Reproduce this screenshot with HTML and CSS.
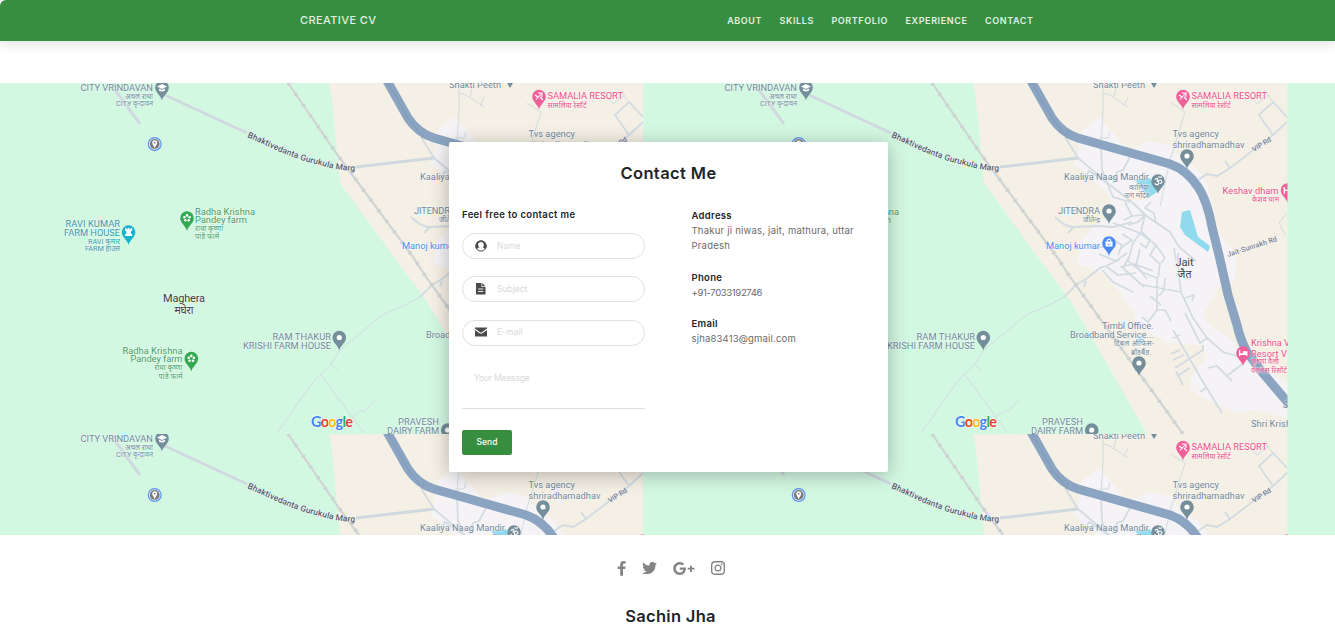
FILE: index.html
```html
<!DOCTYPE html>
<html lang="en">
<head>
<meta charset="utf-8">
<title>Creative CV</title>
<link rel="stylesheet" href="styles.css">
</head>
<body>
<svg class="defs" width="0" height="0" aria-hidden="true">
  <defs>
    <path id="marg" d="M247 54C270 64 292 76 320 82Q338 88 358 88"/>
    <g id="pin"><path d="M0 13C-1.200 7.500-6.800 5.500-6.800 0A6.800 6.800 0 0 1 6.800 0C6.800 5.500 1.200 7.500 0 13Z"/></g>
    <g id="dot"><circle r="2.600" fill="#fff"/></g>
    <g id="flower" fill="#fff"><circle cy="-2.600" r="1.300"/><circle cx="2.600" cy="-.7" r="1.300"/><circle cx="1.700" cy="2.300" r="1.300"/><circle cx="-1.700" cy="2.300" r="1.300"/><circle cx="-2.600" cy="-.7" r="1.300"/></g>
  </defs>
</svg>

<nav class="navbar">
  <div class="navbar-inner">
    <a class="brand">CREATIVE CV</a>
    <div class="links">
      <a>ABOUT</a><a>SKILLS</a><a>PORTFOLIO</a><a>EXPERIENCE</a><a>CONTACT</a>
    </div>
  </div>
</nav>

<section class="contact">
  <div class="map" id="map">
    <svg class="tile" width="644" height="351" viewBox="0 0 644 351">
      <rect width="644" height="351" fill="#d3f8e2"/>
      <path fill="#f5f0e5" d="M329 0L332 16 337 70 340 100 396 177 426 217 439 239 503 351H643.500V0Z"/>
      <path fill="#f5f3f5" d="M455 34L438 47 435 66 430 82 439 87 466 113V134L449 144 439 157 433 177 434 181 458 190 476 209 489 229 493 242 523 260 559 262 562 275 546 295V305L559 315 593 330 613 327 643.500 335V300L616 285 586 255 568 244 559 232 569 214 578 200 591 199 592 172 574 148 563 100 554 87 536 74 526 62 506 58 484 67Z"/>
      <path fill="#90daee" d="M491 97L506 95 513 109 504 115 499 106ZM538 129L546 127 554 154 566 163 564 169 541 152 536 144Z"/>
      <g fill="none" stroke="#d2dbe1">
        <path stroke="#d0d9e0" stroke-width="3" d="M115 7L140 41M165 12L247 50M356 84L434 75"/>
        <path stroke-width="1" d="M420 214L405 222 382 232 340 267 331 281 313 299 277 350M321 292L352 334 364 350M352 334L360 328H365L376 316M331 281L338 288"/>
        <path stroke-width="1" d="M459 0V30L457 60M459 10L466 12 484 24M480 23L484 14M470 14L472 5M455 55H464L466 48M541 29L526 77 516 124M527 20L541 29M628 18L620 7M605 12L613 21 625 12M643 130L635 140 642 153"/>
        <path stroke-width="1.800" d="M420 214L432 202 442 196 456 185 462 183 475 177M442 198L440 204M458 187L469 199 489 209M421 54L434 75 466 102 489 120 501 132 526 149 535 164 552 178M466 102L445 88 440 96M457 60L458 87 469 114 486 119M486 74L479 87 473 89 469 100M554 97L563 91 573 93 586 85 629 52 643 39M581 78L586 85M629 52L615 32 629 19 643 34M411 134Q420 143 428 144L456 143 469 144 488 139M424 150L430 144"/>
        <path stroke-width="1.700" d="M469 140L496 150 512 162 521 175M480 137L488 133 501 132 494 139 484 142M488 133L481 119M496 150L489 160 484 178 498 189 513 195V227L504 239 498 234M512 227H521L527 238M521 195L520 207 515 213M506 213L517 222M501 132L497 148 506 157 502 165 496 160M512 162L506 172 516 181 514 195M521 175L517 180M478 151L488 157 477 165M470 157L478 162 474 172M496 166L492 182 503 196M486 172L479 185 500 204M476 184L490 181 509 188M455 171L472 178 483 170M463 184L474 192 492 190M507 119L501 125 510 130 512 140M534 170L534 182 537 209 549 235 563 255 579 269 593 273 600 275M499 202L537 209M541 215L550 212 548 218M541 230L556 260 563 255M559 262V267L531 285M529 247L559 299 578 330M529 255L536 252M536 267L527 271M540 272L529 277M532 288L539 302M539 289L546 285M533 293L540 289M564 285L573 283 588 298M584 292L601 279M556 309L562 305M452 164L472 164M530 165L532 177"/>
        <path stroke="#d0d5d4" stroke-width="2.200" d="M288 0L339 74 413 174 426 194 539 351"/>
        <path stroke="#cbd1d1" stroke-width="4" stroke-dasharray="2 11" d="M288 0L339 74 413 174 426 194 539 351"/>
      </g>
      <g fill="none" stroke="#8aa4c1" stroke-linejoin="round">
        <path stroke-width="9" d="M386 -4L408 35Q418 50 434 55L526 81Q543 87 554 104 563 117 568 144L575 172 584 212 593 242Q596 256 603 269L618 289 646 322"/>
        <path stroke="#7891b3" stroke-width=".6" d="M386 -4L408 35 421 52M422 55L424 49"/>
      </g>

      <g fill="#758e9b">
        <use href="#pin" x="162" y="4.500"/><use href="#pin" x="339.300" y="254.500"/><use href="#pin" x="447.700" y="347"/><use href="#pin" x="543" y="73"/><use href="#pin" x="514" y="98"/><use href="#pin" x="465" y="128"/><use href="#pin" x="495" y="280"/><path d="M507 0H513L510 5Z"/>
      </g>
      <g fill="#34a853"><use href="#pin" x="187" y="135"/><use href="#pin" x="191.300" y="275.500"/></g>
      <use href="#pin" x="128.600" y="149" fill="#12b5cb"/>
      <use href="#pin" x="465" y="160" fill="#4a8af4"/>
      <g fill="#f2609a"><use href="#pin" x="539" y="13.500"/><use href="#pin" x="643.500" y="107"/><use href="#pin" x="599" y="270"/></g>
      <rect x="643.500" width="1" height="351" fill="#d3f8e2"/>
      <use href="#dot" x="339.300" y="254.500"/><use href="#dot" x="447.700" y="347"/><use href="#dot" x="543" y="73"/><use href="#dot" x="465" y="128"/><use href="#dot" x="495" y="280"/>
      <use href="#flower" x="187" y="135"/><use href="#flower" x="191.300" y="275.500"/>
      <path fill="#fff" d="M157 3.500L162 1 167 3.500 162 6ZM159 5.500V7.500Q162 9.500 165 7.500V5.500L162 7ZM125 145H126.500V146.300H127.800V145H129.400V146.300H130.700V145H132.200V148H130.900V151H132.200V153H125V151H126.300V148H125ZM461.500 158.500H468.500V163.500H461.500ZM595 267H596.300V270.300H599V268.300H603.500V273H602.300V272H596.300V273H595ZM639.500 104H641V106.500H643.500V108H641V110.500H639.500Z"/>
      <path fill="none" stroke="#fff" stroke-width="1.100" d="M463.200 158.500Q463.200 156 465 156T466.800 158.500M536 16.500L541 11M538 10H542V14M535 12L538 14M540 14L543 17M511 96.500Q514 94 514 97 514 98 512.500 98 515 98 514.500 101 512 103 511 100M514.500 98Q517 95.500 518 99 517 101 515.500 100M514.500 93.500Q516 95 518 93.500"/>
      <path stroke="#4a8af4" d="M463.200 160.800Q465 163 466.800 160.800" fill="none" stroke-width=".7"/>
      <circle cx="154.700" cy="61" r="6.400" fill="#e9f3fb" stroke="#5b93ee" stroke-width="1.200"/>
      <circle cx="154.700" cy="61" r="4.900" fill="#7b7b7b"/>
      <path fill="#fff" d="M154.700 65.500C154.400 63 152.200 62 152.200 59.700A2.500 2.500 0 0 1 157.200 59.700C157.200 62 155 63 154.700 65.500Z"/>
      <circle cx="154.700" cy="59.600" r=".9" fill="#777"/>

      <g class="label slate end">
        <text x="153" y="8" textLength="72.500">CITY VRINDAVAN</text>
        <text class="hi" x="153" y="15.500" textLength="28">अचल राधा</text>
        <text class="hi" x="153" y="22.500" textLength="37">CITY वृन्दावन</text>
        <text x="331" y="257" textLength="58.500">RAM THAKUR</text>
        <text x="331" y="266" textLength="88">KRISHI FARM HOUSE</text>
        <text x="439" y="342" textLength="41">PRAVESH</text>
        <text x="439" y="351" textLength="52">DAIRY FARM</text>
        <text x="505" y="97" textLength="85">Kaaliya Naag Mandir</text>
        <text class="hi" x="505" y="107" textLength="20">कालिया</text>
        <text class="hi" x="505" y="114.500" textLength="25">नाग मंदिर</text>
        <text x="456" y="131" textLength="42">JITENDRA</text>
        <text class="hi" x="456" y="139" textLength="17">जीतेन्द्र</text>
        <text x="509.500" y="246" textLength="51.500">Timbl Office.</text>
        <text x="509.500" y="255" textLength="83.500">Broadband Service...</text>
        <text class="hi" x="510" y="263" textLength="40">टिंबल ऑफिस-</text>
        <text class="hi" x="509" y="271.500" textLength="22">ब्रॉडबैंड .</text>
      </g>
      <g class="label slate">
        <text x="449" y="4.500" textLength="52">Shakti Peeth</text>
        <text x="528.500" y="54" textLength="46.500">Tvs agency</text>
        <text x="528.500" y="65" textLength="72">shriradhamadhav</text>
        <text x="607" y="344" textLength="40">Shri Krish</text>
        <text x="638.500" y="325">S</text>
      </g>
      <g class="label teal end">
        <text x="120" y="143.500" textLength="54.500">RAVI KUMAR</text>
        <text x="120" y="153" textLength="56">FARM HOUSE</text>
        <text class="hi" x="120" y="160.500" textLength="32">RAVI कुमार</text>
        <text class="hi" x="120" y="167.500" textLength="35">FARM हाउस</text>
      </g>
      <g class="label green">
        <text x="195" y="131.500" textLength="60">Radha Krishna</text>
        <text x="195" y="139.500" textLength="52">Pandey farm</text>
        <text class="hi" x="195" y="147.500" textLength="28">राधा कृष्णा</text>
        <text class="hi" x="195" y="156" textLength="24">पांडे फार्म</text>
      </g>
      <g class="label green end">
        <text x="182.500" y="271" textLength="60">Radha Krishna</text>
        <text x="182.500" y="279" textLength="52">Pandey farm</text>
        <text class="hi" x="182.500" y="286.500" textLength="28">राधा कृष्णा</text>
        <text class="hi" x="182.500" y="295.500" textLength="24">पांडे फार्म</text>
      </g>
      <g class="label pink">
        <text x="547.500" y="16" textLength="75.500">SAMALIA RESORT</text>
        <text class="hi" x="547.500" y="24.500" textLength="39">सामलिया रेसॉर्ट</text>
        <text x="607" y="263" textLength="39">Krishna V</text>
        <text x="607" y="273.500" textLength="36">Resort V</text>
        <text class="hi" x="607" y="281" textLength="28">कृष्णा वैली</text>
        <text class="hi" x="607" y="289.500" textLength="36">वेलनेस रिसॉर्ट</text>
      </g>
      <g class="label pink end">
        <text x="634.500" y="110.500" textLength="56">Keshav dham</text>
        <text class="hi" x="635" y="118.500" textLength="27">केशव धाम</text>
      </g>
      <text class="label blue end" x="456" y="166" textLength="54">Manoj kumar</text>
      <g class="label town">
        <text x="184" y="219" textLength="42">Maghera</text>
        <text class="town-hi" x="184" y="230.500" textLength="19">मघेरा</text>
        <text x="540.500" y="183" textLength="18">Jait</text>
        <text class="town-hi" x="540.500" y="195" textLength="14">जैत</text>
      </g>
      <text class="label road"><textPath href="#marg" textLength="114">Bhaktivedanta Gurukula Marg</textPath></text>
      <text class="label road small" transform="translate(610 69) rotate(-32)" textLength="21">VIP Rd</text>
      <text class="label road small" transform="translate(584 174) rotate(-18)" textLength="52">Jait-Sunrakh Rd</text>
      <text class="logo" x="311" y="344" textLength="42"><tspan fill="#4285f4">G</tspan><tspan fill="#ea4335">o</tspan><tspan fill="#fbbc04">o</tspan><tspan fill="#4285f4">g</tspan><tspan fill="#34a853">l</tspan><tspan fill="#ea4335">e</tspan></text>
    </svg>
  </div>

  <div class="card">
    <h1 class="card-title">Contact Me</h1>
    <div class="columns">
      <form class="form">
        <p class="lead">Feel free to contact me</p>
        <div class="field">
          <svg width="12" height="12" viewBox="0 0 12 12"><circle cx="6" cy="6" r="5.100" fill="none" stroke="#4a4a4a"/><path fill="#4a4a4a" fill-rule="evenodd" d="M6 .5A5.500 5.500 0 0 0 1.800 9.600Q2.500 7.800 4.300 7.600 3.100 6.500 3.100 4.800A2.900 2.900 0 0 1 8.900 4.800Q8.900 6.500 7.700 7.600 9.500 7.800 10.200 9.600A5.500 5.500 0 0 0 6 .5Z"/></svg>
          <span>Name</span>
        </div>
        <div class="field">
          <svg width="12" height="12" viewBox="0 0 12 12"><path fill="#4a4a4a" d="M1 0H6.500V4H10.500V11.500H1ZM7.200 0L10.500 3.300H7.200Z"/><path stroke="#fff" d="M3.200 6H8.300M3.200 8.500H8.300" stroke-width=".9"/></svg>
          <span>Subject</span>
        </div>
        <div class="field">
          <svg width="12" height="12" viewBox="0 0 12 12"><path fill="#4a4a4a" d="M0 1.500H12V2.600L6.600 6.500H5.400L0 2.600ZM0 3.900L5 7.500H7L12 3.900V10.500H0Z"/></svg>
          <span>E-mail</span>
        </div>
        <div class="message">Your Message</div>
        <button class="send" type="button">Send</button>
      </form>
      <div class="info">
        <h2>Address</h2>
        <p class="addr">Thakur ji niwas, jait, mathura, uttar<br>Pradesh</p>
        <h2>Phone</h2>
        <p class="phone">+91-7033192746</p>
        <h2>Email</h2>
        <p class="mail">sjha83413@gmail.com</p>
      </div>
    </div>
  </div>
</section>

<footer class="footer">
  <div class="social">
    <svg width="9" height="15" viewBox="0 0 9 15"><path fill="#848484" d="M8.700.2V2.600H7.300Q6 2.600 6 3.800V5.400H8.600L8.300 8H6V14.800H3.200V8H.6V5.400H3.200V3.400Q3.200 0 6.600 0Q7.900 0 8.700.2Z"/></svg>
    <svg width="15" height="12" viewBox="0 0 15 12"><path fill="#848484" d="M15 1.500Q14.400 2.400 13.500 3 13.700 7 11 9.700 8.300 12.200 4.700 12.200 2.100 12.200 0 10.900 2.700 11.100 4.600 9.600 2.500 9.400 1.800 7.500 2.500 7.600 3.100 7.400 .7 6.700 .7 4.300 1.300 4.700 2.100 4.700-.1 3 1.100.6 3.700 3.700 7.400 3.800 6.900 1.700 8.400.6 10.700-.8 12.600.9 13.600.7 14.500.2 14.200 1.200 13.200 1.900 14.100 1.900 15 1.500Z"/></svg>
    <svg width="22" height="13" viewBox="0 0 22 13"><path fill="#848484" d="M6.800 5.500H13Q13.300 8.700 11.600 10.700 9.800 12.900 6.700 12.900 3.900 12.900 2 11 .2 9.200.2 6.500T2 2Q3.900 0 6.700 0 9.300 0 11.100 1.800L9.300 3.500Q8.300 2.500 6.700 2.500 5 2.500 3.900 3.700 2.800 4.900 2.800 6.500T3.900 9.300Q5 10.500 6.700 10.500 9.700 10.500 10.300 7.700H6.800ZM17 3.800H18.900V5.700H21.500V7.600H18.900V9.900H17V7.600H14.700V5.700H17Z"/></svg>
    <svg width="14" height="14" viewBox="0 0 14 14"><rect x=".7" y=".7" width="12.600" height="12.600" rx="3.400" fill="none" stroke="#848484" stroke-width="1.400"/><circle cx="7" cy="7" r="2.900" fill="none" stroke="#848484" stroke-width="1.300"/><circle cx="10.700" cy="3.300" r=".9" fill="#848484"/></svg>
  </div>
  <div class="name">Sachin Jha</div>
</footer>
<script src="map.js"></script>
</body>
</html>
```
FILE: styles.css
```css
* { box-sizing: border-box; }
body {
  margin: 0;
  height: 638px;
  overflow: hidden;
  background: #fff;
  font-family: Inter, "Open Sans", sans-serif;
  color: #212529;
}
.defs { position: absolute; }
h1, h2, p { margin: 0; }

.navbar {
  height: 41px;
  background: #388e3f;
  border-top-left-radius: 6px;
  box-shadow: 0 3px 14px rgba(0, 0, 0, .13);
}
.navbar-inner {
  width: 733.500px;
  height: 40px;
  margin-left: 300px;
  display: flex;
  align-items: center;
  justify-content: space-between;
  color: #e1f0e2;
}
.brand { font-size: 11px; font-weight: 500; letter-spacing: .4px; }
.links { display: flex; gap: 17.500px; font-size: 9px; font-weight: 600; letter-spacing: .6px; }
.links a { white-space: nowrap; }

.contact {
  position: relative;
  margin-top: 42px;
  height: 452px;
  padding-top: 59px;
}
.map {
  position: absolute;
  inset: 0;
  overflow: hidden;
  background: #d3f8e2;
  display: grid;
  grid-template-columns: repeat(2, 644px);
  grid-template-rows: repeat(2, 351px);
}
.tile { display: block; overflow: hidden; }
.label {
  font-family: Roboto, "Noto Sans", sans-serif;
  font-size: 9.3px;
  paint-order: stroke;
  stroke: rgba(255, 255, 255, .55);
  stroke-width: 1px;
}
.label .hi { font-size: 7.300px; }
.end { text-anchor: end; }
.slate { fill: #70889a; }
.teal { fill: #3a97ab; }
.green { fill: #469d63; }
.pink { fill: #ee4f8c; }
.blue { fill: #4c8df5; }
.town { fill: #3c4043; font-size: 11px; text-anchor: middle; }
.label .town-hi { font-size: 10.500px; }
.road { fill: #55596e; font-size: 8.400px; font-weight: 500; }
.small { font-size: 7.200px; fill: #747d93; }
.logo {
  font-family: Lato, sans-serif;
  font-size: 14.500px;
  font-weight: 700;
  paint-order: stroke;
  stroke: #fff;
  stroke-width: 1px;
}

.card {
  position: relative;
  width: 439px;
  height: 330px;
  margin-left: 449px;
  padding: 20px 13px 0;
  background: #fff;
  border-radius: 2px;
  box-shadow: 0 3px 20px rgba(0, 0, 0, .27);
}
.card-title {
  height: 45px;
  line-height: 23px;
  text-align: center;
  font-size: 16.500px;
  font-weight: 600;
  letter-spacing: .4px;
}
.columns { display: grid; grid-template-columns: 183px 1fr; column-gap: 46.500px; }
.lead {
  height: 26px;
  line-height: 15px;
  font-size: 9.500px;
  font-weight: 600;
  letter-spacing: .36px;
  white-space: nowrap;
}
.field {
  display: flex;
  align-items: center;
  gap: 10px;
  height: 26px;
  margin-bottom: 17.400px;
  padding-left: 12px;
  padding-bottom: 1px;
  border: 1px solid #e0e0e0;
  border-radius: 13px;
  color: #d9d9d9;
  font-size: 8.500px;
}
.message {
  height: 46px;
  padding: 9px 12px;
  border-bottom: 1px solid #dedede;
  color: #d9d9d9;
  font-size: 8.500px;
  letter-spacing: -.15px;
  line-height: 13px;
}
.send {
  display: block;
  width: 50px;
  height: 25px;
  margin-top: 21px;
  padding: 0 0 1px;
  border: 0;
  border-radius: 2px;
  background: #388e3f;
  color: #fff;
  font: 500 8.500px Inter, sans-serif;
}
.info { padding-top: 1px; line-height: 15.400px; white-space: nowrap; }
.info h2 { font-size: 9.500px; font-weight: 600; letter-spacing: .3px; }
.info p {
  position: relative;
  margin-bottom: 16px;
  font-size: 9.500px;
  color: #6a6a6a;
}
.info h2 + p { margin-top: -.400px; }
.addr { letter-spacing: .22px; }
.phone { letter-spacing: -.35px; }
.mail { letter-spacing: .17px; }

.footer { display: flex; flex-direction: column; align-items: center; padding-left: 6px; }
.social {
  display: flex;
  align-items: center;
  height: 20px;
  margin-top: 23px;
  gap: 16px;
}
.name {
  margin-top: 28px;
  line-height: 20px;
  font-size: 16.500px;
  font-weight: 600;
  letter-spacing: .3px;
}
```
FILE: map.js
```js
// Repeat the map tile to fill the two-by-two background grid.
const map = document.getElementById('map');
const tile = map.querySelector('.tile');
for (let i = 0; i < 3; i += 1) {
  map.appendChild(tile.cloneNode(true));
}
```
